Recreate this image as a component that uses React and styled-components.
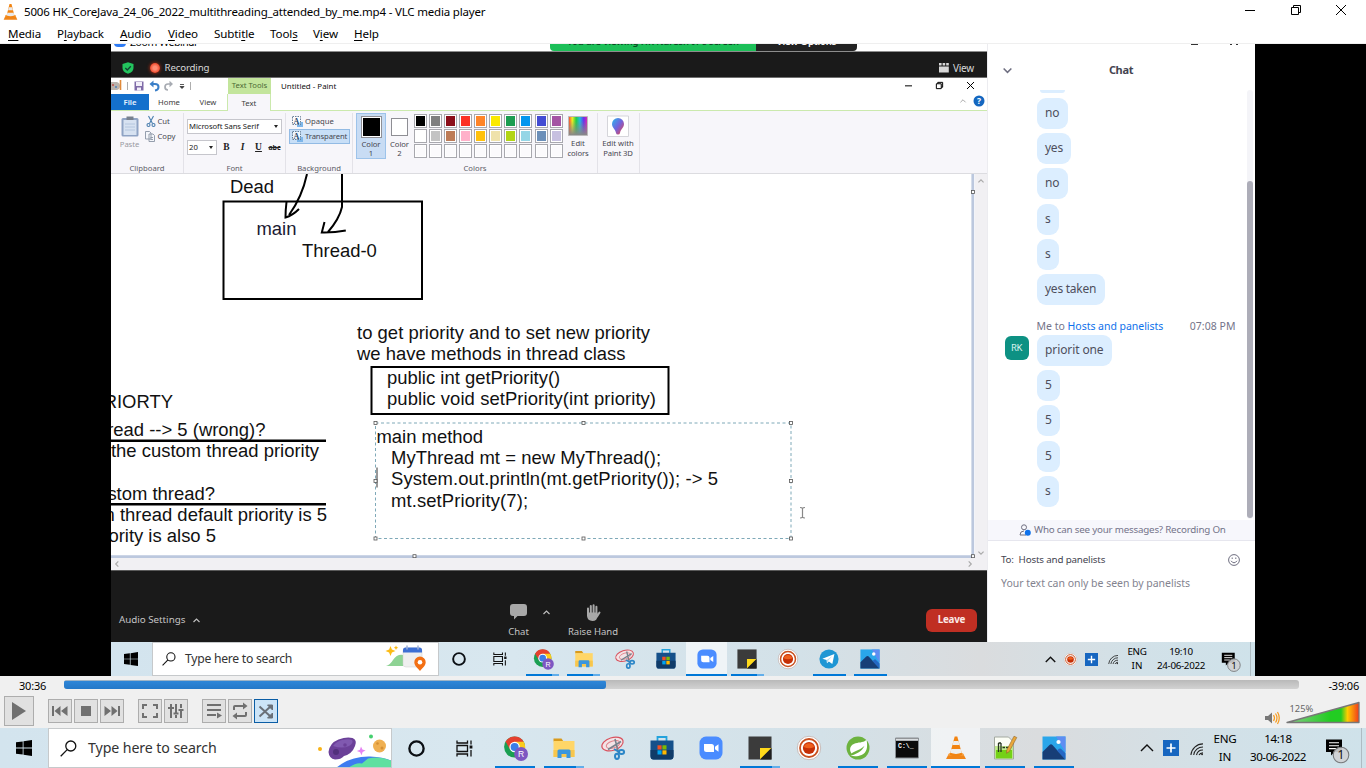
import React from "react";
import styled, { createGlobalStyle, css } from "styled-components";

const Global = createGlobalStyle`
  *, *::before, *::after { box-sizing: border-box; }
  html, body { margin: 0; padding: 0; overflow: hidden; }
  body { font-family: "Noto Sans", "Open Sans", sans-serif; color: #000; }
  svg { display: block; flex: none; overflow: visible; }
`;

const Screen = styled.div`
  width: 1366px;
  height: 768px;
  display: flex;
  flex-direction: column;
  background: #fff;
  overflow: hidden;
`;

const Text = styled.span`
  display: block;
  flex: none;
  white-space: pre;
  font-size: ${(p) => p.$size || 11.5}px;
  font-weight: ${(p) => p.$weight || 400};
  color: ${(p) => p.$color || "#000"};
  letter-spacing: ${(p) => p.$track || 0}px;
  line-height: ${(p) => p.$line || 14}px;
`;

/* ---------- VLC window frame ---------- */

const TitleBar = styled.header`
  height: 24px;
  flex: none;
  display: flex;
  align-items: center;
  padding-left: 3px;
  gap: 6px;
`;

const WindowButtons = styled.div`
  display: flex;
  margin-left: auto;
  padding: 0 20px 4px 0;
  gap: 35.500px;
`;

const MenuBar = styled.nav`
  height: 20px;
  flex: none;
  display: flex;
  align-items: center;
  padding-left: 8px;
  border-bottom: 1px solid #efefef;
`;

const MenuItem = styled.div`
  width: ${(p) => p.$w}px;
  font-size: 11.6px;
  line-height: 18px;
  letter-spacing: -0.13px;
  white-space: nowrap;
  u { text-underline-offset: 2px; text-decoration-thickness: 1px; }
`;

const VideoArea = styled.main`
  height: 632px;
  flex: none;
  background: #000;
  padding: 0 111px;
`;

const VideoFrame = styled.div`
  width: 1144px;
  height: 632px;
  display: flex;
  flex-direction: column;
  overflow: hidden;
`;

const Webinar = styled.div`
  height: 598px;
  display: flex;
`;

const Stage = styled.section`
  width: 876px;
  display: flex;
  flex-direction: column;
  background: #1a1a1a;
`;

/* ---------- Zoom webinar ---------- */

const CutTitle = styled.div`
  height: 8px;
  flex: none;
  display: flex;
  overflow: hidden;
  background: #fff;
  border-bottom: 1px solid #8d8d8d;
`;

const CutLogo = styled.div`
  width: 12px;
  height: 13px;
  flex: none;
  margin: -10px 4px 0 3px;
  border-radius: 4px;
  background: #2d7bf4;
`;

const CutText = styled(Text)`
  margin-top: -9px;
  width: ${(p) => (p.$w ? p.$w + "px" : "auto")};
`;

const Banner = styled.div`
  display: flex;
  margin-left: 350px;
  height: 6.5px;
  border-radius: 0 0 4px 4px;
  overflow: hidden;
`;

const BannerPart = styled.div`
  width: ${(p) => p.$w}px;
  height: 20px;
  background: ${(p) => p.$bg};
  display: flex;
  justify-content: center;
`;

const StageTop = styled.div`
  height: 26px;
  flex: none;
  display: flex;
  align-items: center;
  padding: 6px 13px 0 11px;
  border-bottom: 1px solid #6f6f6f;
`;

const RecDot = styled.div`
  width: 10px;
  height: 10px;
  margin: 0 5px 0 15.500px;
  border-radius: 50%;
  background: radial-gradient(#ff8d74 25%, #f0492b 70%);
  box-shadow: 0 0 3px 1px #7a2413;
`;

const ViewButton = styled.div`
  display: flex;
  align-items: center;
  gap: 4px;
  margin-left: auto;
`;

const StageBottom = styled.div`
  height: 72px;
  flex: none;
  display: flex;
  padding-top: 33px;
  border-top: 1px solid #5a5a5a;
`;

const AudioSettings = styled.div`
  width: 389px;
  display: flex;
  align-items: center;
  gap: 8px;
  padding: 0 0 6px 8px;
  height: 38px;
`;

const ToolButton = styled.div`
  width: ${(p) => p.$w}px;
  display: flex;
  flex-direction: column;
  align-items: center;
  justify-content: space-between;
  height: 33.5px;
`;

const CaretSlot = styled.div`
  width: 18px;
  padding: 5px 0 0 6px;
`;

const LeaveButton = styled.div`
  width: 51px;
  height: 23px;
  margin: 5px 10px 0 auto;
  border-radius: 6px;
  background: #c02f23;
  display: flex;
  align-items: center;
  justify-content: center;
  padding-bottom: 1px;
`;

/* ---------- Paint ---------- */

const PaintTitle = styled.div`
  height: 16px;
  flex: none;
  display: flex;
  align-items: center;
  background: #fff;
`;

const QuickTools = styled.div`
  width: 117px;
  display: flex;
  align-items: center;
`;

const ContextTab = styled.div`
  width: 43px;
  height: 16px;
  margin-right: 10px;
  padding-bottom: 2px;
  background: #c3e59c;
  display: flex;
  align-items: center;
  justify-content: center;
`;

const PaintButtons = styled.div`
  display: flex;
  align-items: center;
  gap: 24px;
  margin: 0 13.5px 1px auto;
`;

const TabRow = styled.div`
  height: 17px;
  flex: none;
  display: flex;
  align-items: stretch;
  background: #fff;
  border-bottom: 1px solid #cbe9ad;
`;

const Tab = styled.div`
  width: ${(p) => p.$w}px;
  display: flex;
  align-items: center;
  justify-content: center;
  background: ${(p) => p.$bg || "transparent"};
  ${(p) =>
    p.$active &&
    css`
      background: #f7f6fa;
      margin-bottom: -1px;
      border: 1px solid #cbe9ad;
      border-width: 0 1px;
    `}
`;

const TabEnd = styled.div`
  display: flex;
  align-items: center;
  gap: 7px;
  margin: -2px 2px 0 auto;
`;

const Ribbon = styled.div`
  height: 63px;
  flex: none;
  display: flex;
  background: #f7f6fa;
  border-bottom: 1px solid #dcdce0;
`;

const Group = styled.div`
  width: ${(p) => p.$w}px;
  margin: 2px 0 0;
  padding-top: ${(p) => p.$top || 0}px;
  border-right: 1px solid #e3e2e8;
  display: flex;
  flex-direction: column;
`;

const GroupBody = styled.div`
  flex: 1;
  display: flex;
  padding-left: ${(p) => p.$left || 0}px;
  min-height: 0;
`;

const GroupLabel = styled(Text).attrs({ $size: 7.7, $color: "#5c5c66", $line: 10 })`
  align-self: center;
`;

const Stack = styled.div`
  display: flex;
  flex-direction: column;
  align-items: ${(p) => p.$align || "stretch"};
  width: ${(p) => p.$w}px;
  gap: ${(p) => p.$gap || 0}px;
  padding-top: ${(p) => p.$top || 0}px;
`;

const IconLine = styled.div`
  display: flex;
  align-items: center;
  gap: 2px;
  height: 15px;
  width: ${(p) => (p.$w ? p.$w + "px" : "auto")};
  padding-left: 2px;
  border: 1px solid ${(p) => (p.$on ? "#93bbe4" : "transparent")};
  background: ${(p) => (p.$on ? "#c8dff7" : "transparent")};
`;

const Combo = styled.div`
  width: ${(p) => p.$w}px;
  height: 15px;
  flex: none;
  border: 1px solid #c6c6cc;
  background: #fff;
  display: flex;
  align-items: center;
  justify-content: space-between;
  padding: 0 3px 0 1px;
`;

const FontRow = styled.div`
  display: flex;
  align-items: center;
  > :nth-child(2) { margin-left: 1.5px; }
`;

const Glyph = styled.span`
  width: 16px;
  flex: none;
  text-align: center;
  font: ${(p) => p.$font || 'bold 9.5px "Liberation Serif", serif'};
  color: #222;
  text-decoration: ${(p) => p.$deco || "none"};
`;

const ColorButton = styled.div`
  width: ${(p) => p.$w}px;
  height: 46px;
  display: flex;
  flex-direction: column;
  align-items: center;
  padding-top: ${(p) => p.$top}px;
  border: 1px solid ${(p) => (p.$on ? "#9dc3ea" : "transparent")};
  background: ${(p) => (p.$on ? "#c8dcf4" : "transparent")};
`;

const Swatch = styled.div`
  width: ${(p) => p.$s}px;
  height: ${(p) => p.$s + 1}px;
  margin-bottom: ${(p) => p.$below}px;
  background: ${(p) => p.$c};
  border: 1px solid #8e8e94;
  box-shadow: inset 0 0 0 1px #fff;
`;

const Palette = styled.div`
  display: grid;
  grid-template-columns: repeat(10, 13px);
  grid-auto-rows: 14px;
  column-gap: 2.07px;
  row-gap: 1px;
  width: 151px;
  margin: 1px 3px 0 1px;
`;

const Cell = styled.div`
  background: ${(p) => p.$c};
  border: 1px solid #a8a8ae;
  box-shadow: inset 0 0 0 1px #fff;
`;

const CanvasRow = styled.div`
  height: 384px;
  flex: none;
  display: flex;
`;

const CanvasView = styled.div`
  width: 864px;
  height: 384px;
  overflow: hidden;
`;

const VScroll = styled.div`
  width: 12px;
  background: #f1f0f3;
  display: flex;
  flex-direction: column;
  justify-content: space-between;
  align-items: center;
  padding: 4px 0 2px;
`;

const HScroll = styled.div`
  height: 12px;
  flex: none;
  background: #f1f0f3;
  display: flex;
  justify-content: space-between;
  align-items: center;
  padding: 0 14px 0 3px;
`;

/* ---------- Chat panel ---------- */

const ChatPanel = styled.aside`
  width: 268px;
  background: #fff;
  display: flex;
  flex-direction: column;
  border-left: 1px solid #ececf0;
`;

const CutButtons = styled.div`
  height: 2px;
  flex: none;
  display: flex;
  padding: 0 15px 0 203px;
  justify-content: space-between;
`;

const CutMark = styled.i`
  width: ${(p) => p.$w}px;
  height: 1px;
  background: #333;
  box-shadow: ${(p) => (p.$pair ? "6px 0 #333" : "none")};
  margin-right: ${(p) => (p.$pair ? 8 : 0)}px;
`;

const ChatHeader = styled.div`
  height: 44px;
  flex: none;
  display: grid;
  grid-template-columns: 16px 1fr 16px;
  align-items: center;
  padding: 4px 12px 0 11px;
  justify-items: center;
`;

const MessagesRow = styled.div`
  height: 430px;
  flex: none;
  display: flex;
  overflow: hidden;
`;

const Messages = styled.div`
  width: 259px;
  display: flex;
  flex-direction: column;
  align-items: flex-start;
  gap: 4.3px;
  padding-left: 48.5px;
`;

const Bubble = styled.div`
  height: 31px;
  flex: none;
  padding: 0 8.5px;
  border-radius: 9px;
  background: #dceeff;
  color: #4e4e5c;
  font-size: 12px;
  letter-spacing: ${(p) => p.$track || -0.25}px;
  line-height: 30px;
  white-space: nowrap;
`;

const BubbleStub = styled.div`
  width: 25px;
  height: 3px;
  margin: 0 0 0.4px 3px;
  border-radius: 0 0 7px 7px;
  background: #dceeff;
  flex: none;
`;

const MessageMeta = styled.div`
  height: 14px;
  width: 199px;
  margin: 10px 0 -3px 0;
  display: flex;
  flex: none;
  > :last-child { margin-left: auto; }
`;

const OwnMessage = styled.div`
  display: flex;
  gap: 8px;
  margin-left: -32px;
  flex: none;
`;

const Avatar = styled.div`
  width: 24px;
  height: 24px;
  margin-top: 1px;
  border-radius: 6px;
  background: #0d9183;
  color: #d9f3ef;
  font-size: 9.5px;
  line-height: 23px;
  letter-spacing: -0.3px;
  text-align: center;
`;

const ScrollTrack = styled.div`
  width: 6px;
  height: 429px;
  padding-top: 91px;
  border-radius: 3px;
  background: #f4f4f8;
`;

const ScrollThumb = styled.div`
  height: 337px;
  border-radius: 3px;
  background: #adadb8;
`;

const Notice = styled.div`
  height: 21px;
  flex: none;
  display: flex;
  align-items: center;
  gap: 3px;
  padding-left: 31px;
  background: #f7f7fc;
  border-bottom: 1px solid #e6e6ee;
`;

const ToRow = styled.div`
  display: flex;
  align-items: center;
  height: 16px;
  margin: 11px 15px 8px 13px;
  svg { margin-left: auto; }
`;

const Placeholder = styled(Text)`
  margin-left: 13px;
`;

/* ---------- Taskbars ---------- */

const Bar = styled.div`
  height: ${(p) => p.$h}px;
  flex: none;
  display: flex;
  background: linear-gradient(90deg, #d3e4ee 0%, #d8e7ef 35%, #d3e1e8 60%, #dadcde 76%, #d2e1e8 90%, #cfe2ea 100%);
`;

const Slot = styled.div`
  width: ${(p) => p.$w}px;
  height: 100%;
  flex: none;
  display: flex;
  align-items: center;
  justify-content: center;
`;

const SearchBox = styled.div`
  width: ${(p) => p.$w}px;
  height: 100%;
  flex: none;
  display: flex;
  align-items: center;
  overflow: hidden;
  background: #fff;
  border: 1px solid #c6c9cb;
  padding-left: ${(p) => p.$left}px;
  gap: ${(p) => p.$gap}px;
  > svg:last-child { margin-left: auto; margin-right: ${(p) => p.$art}px; }
`;

const Apps = styled.div`
  display: flex;
  margin-left: ${(p) => p.$left}px;
`;

const AppSlot = styled.div`
  width: ${(p) => p.$w}px;
  height: 100%;
  display: flex;
  flex-direction: column;
  align-items: center;
  background: ${(p) => (p.$active ? "rgba(255,255,255,.62)" : "transparent")};
`;

const AppIcon = styled.div`
  flex: 1;
  display: flex;
  align-items: center;
  margin-bottom: -2px;
`;

const Underline = styled.div`
  width: ${(p) => p.$w}px;
  height: 2px;
  background: ${(p) =>
    !p.$on ? "transparent" : p.$multi ? "linear-gradient(90deg, #0078d7 80%, #62aeea 80%)" : "#0078d7"};
`;

const Tray = styled.div`
  display: flex;
  margin-left: auto;
  padding-right: 4px;
`;

const TrayEdge = styled.div`
  width: 1px;
  background: #aebcc3;
`;

const TwoLines = styled.div`
  width: ${(p) => p.$w}px;
  display: flex;
  flex-direction: column;
  align-items: center;
  justify-content: center;
`;

/* ---------- VLC controls ---------- */

const Controls = styled.footer`
  height: 52px;
  flex: none;
  background: #f0f0f0;
`;

const SeekRow = styled.div`
  height: 19px;
  display: flex;
  align-items: center;
  padding: 1px 7px 0 19px;
  justify-content: space-between;
`;

const SeekTrack = styled.div`
  width: 1235px;
  height: 9px;
  margin: -3px 10px 0 -2px;
  border-radius: 3px;
  background: linear-gradient(#b9b9b9, #d2d2d2);
`;

const SeekFill = styled.div`
  width: 542px;
  height: 9px;
  border-radius: 3px;
  background: linear-gradient(#9fb4c6 0 1px, #2e86d8 1px, #2478c8);
`;

const ButtonRow = styled.div`
  display: flex;
  align-items: center;
  height: 32px;
  padding: 0 6px 0 4px;
`;

const ButtonGroup = styled.div`
  display: flex;
  gap: 2px;
  margin-left: 14px;
`;

const ControlButton = styled.div`
  width: ${(p) => p.$s || 24}px;
  height: ${(p) => p.$s || 24}px;
  display: flex;
  align-items: center;
  justify-content: center;
  border: 1px solid ${(p) => (p.$on ? "#0a5da5" : "#adadad")};
  background: ${(p) => (p.$on ? "#cce4f7" : "#e1e1e1")};
`;

const Volume = styled.div`
  display: flex;
  align-items: flex-end;
  gap: 6px;
  margin: 2px 0 0 auto;
  > svg:first-child { margin-bottom: -3px; }
`;

/* ---------- Icons ---------- */

const Cone = ({ s }) => (
  <svg width={s} height={s + 1} viewBox="0 0 24 24" preserveAspectRatio="none">
    <path d="M4.500 16.500h15l3.500 7H1z" fill="#f08519" />
    <path d="M4.500 16.500h15l1 2.200h-17z" fill="#f9a544" />
    <path d="M10.400 0h3.200L18.700 19q-6.700 3-13.400 0z" fill="#f28412" />
    <path d="M9.300 5h5.400l1.200 4.300H8.100zM7 13h10l1.200 4.300q-6.200 2.300-12.400 0z" fill="#e9e9ea" />
  </svg>
);

const WinControl = ({ kind, s = 10, color = "#000" }) => (
  <svg width={s} height={s} viewBox="0 0 10 10" fill="none" stroke={color} strokeWidth={10 / s}>
    {kind === "min" && <path d="M0 5.500h10" />}
    {kind === "max" && <path d="M.5 2.500h7v7h-7zM2.500 2.500v-2h7v7h-2" />}
    {kind === "close" && <path d="M0 0l10 10M10 0L0 10" />}
  </svg>
);

const Chevron = ({ dir = "up", w = 7, color = "#555", sw = 1.2 }) => {
  const turn = { up: 0, down: 180, left: -90, right: 90 }[dir];
  return (
    <svg width={w} height={w} viewBox="0 0 10 10" fill="none" stroke={color} strokeWidth={(sw * 10) / w}>
      <path d="M.7 7.200L5 2.900l4.300 4.300" transform={`rotate(${turn} 5 5)`} />
    </svg>
  );
};

const WindowsLogo = ({ s }) => (
  <svg width={s} height={s} viewBox="0 0 16 16" fill="#000">
    <path d="M0 2.300l6.700-.9v6.200H0zM7.500 1.300L16 0v7.600H7.500zM0 8.400h6.700v6.200L0 13.700zM7.500 8.400H16V16l-8.500-1.200z" />
  </svg>
);

const SearchIcon = ({ s }) => (
  <svg width={s} height={s} viewBox="0 0 17 17" fill="none" stroke="#111" strokeWidth="1.300">
    <circle cx="10.800" cy="6" r="5" />
    <path d="M7.200 9.600L.7 16.200" />
  </svg>
);

const TaskView = ({ s }) => (
  <svg width={s} height={s} viewBox="0 0 17 17" fill="none" stroke="#111" strokeWidth="1.300">
    <path d="M1 .5v2.500h10.500V.5M1 5.500h10.500v6H1zM1 16.500V14h10.500v2.500M15 .5v4M15 10v6.500" />
    <path d="M13.600 5.500h2.800v3h-2.800z" fill="#111" stroke="none" />
  </svg>
);

const Cortana = ({ s }) => (
  <svg width={s} height={s} viewBox="0 0 16 16">
    <circle cx="8" cy="8" r="6.700" fill="none" stroke="#0b0f14" strokeWidth="2.200" />
  </svg>
);

const appArt = {
  chrome: (
    <g transform="translate(.6 0)">
      <circle cx="11" cy="11" r="10.500" fill="#1a9f52" />
      <path d="M11 11L1.900 5.700A10.500 10.500 0 0120.100 5.700z" fill="#e5402f" />
      <path d="M11 11V5.700h9.100A10.500 10.500 0 0111 21.500l4.600-7.900z" fill="#fccb1c" />
      <path d="M2 5.600l4.500 8 4.500-8z" fill="#e5402f" />
      <circle cx="11" cy="11" r="5.200" fill="#fff" />
      <circle cx="11" cy="11" r="4" fill="#3b7de8" />
      <circle cx="17.500" cy="18" r="6.900" fill="#7e57c2" />
      <text x="17.500" y="21" fontSize="8.500" textAnchor="middle" fill="#fff" fontFamily="Liberation Sans, sans-serif">R</text>
    </g>
  ),
  folder: (
    <>
      <path d="M1.500 2.500h8l2 3h-10z" fill="#d99a1b" />
      <path d="M1.500 5h21v16h-21z" fill="#ffd668" />
      <path d="M1.500 14h21v7h-21z" fill="#f7c64d" />
      <path d="M5.500 22V15q0-1.500 1.500-1.500h10q1.500 0 1.500 1.500v7h-4v-4h-5v4z" fill="#3a96dd" />
    </>
  ),
  snip: (
    <>
      <ellipse cx="11.500" cy="8" rx="11" ry="6.300" fill="#f3e3e6" stroke="#d9525e" strokeWidth="1.200" transform="rotate(-18 11.500 8)" />
      <ellipse cx="12" cy="8.500" rx="7" ry="3.500" fill="none" stroke="#e0848c" transform="rotate(-18 12 8.500)" />
      <path d="M7 13.500L20 5.500M14 3l3.500 14" stroke="#77828c" strokeWidth="1.600" />
      <g fill="none" stroke="#2c86c7" strokeWidth="2">
        <ellipse cx="20.500" cy="16" rx="2.600" ry="2" />
        <ellipse cx="16" cy="20.300" rx="2" ry="2.600" />
      </g>
      <path d="M13 13l5 3" stroke="#2c86c7" strokeWidth="1.800" />
    </>
  ),
  store: (
    <>
      <path d="M7.500 6V1h9v5" fill="none" stroke="#24a3dc" strokeWidth="1.800" />
      <path d="M.5 4.500h23V20q0 3.500-3 3.500h-17q-3 0-3-3.500z" fill="#15508a" />
      <path d="M.5 14h23v6q0 3.500-3 3.500h-17q-3 0-3-3.500z" fill="#103b68" />
      <path d="M7.500 9.300H11.600v4.200H7.500z" fill="#f25022" />
      <path d="M12.400 9.300h4.100v4.200h-4.100z" fill="#7fba00" />
      <path d="M7.500 14.300h4.100v4.200H7.500z" fill="#00a4ef" />
      <path d="M12.400 14.300h4.100v4.200h-4.100z" fill="#ffb900" />
    </>
  ),
  zoom: (
    <>
      <rect x=".5" y=".5" width="23" height="23" rx="6.500" fill="#4a8cff" />
      <path d="M5 8h7.500q2.500 0 2.500 2.500V16H7.500Q5 16 5 13.500zM16 10.800L19.500 8.300v7.400L16 13.200z" fill="#fff" />
    </>
  ),
  notes: (
    <>
      <path d="M.5.5h23v23H.5z" fill="#3b3b3b" />
      <path d="M12 12h11.500L12 23.500z" fill="#ffd91a" />
      <path d="M23.500 12v11.500H12z" fill="#1f1f1f" />
    </>
  ),
  record: (
    <>
      <circle cx="12" cy="12" r="11.700" fill="#fff" stroke="#b9a49e" strokeWidth=".7" />
      <circle cx="12" cy="12" r="9" fill="none" stroke="#c9501f" strokeWidth="1.800" />
      <circle cx="12" cy="12" r="6.100" fill="#c52f06" />
      <path d="M6.800 11a5.500 5.500 0 0110.400 0q-5.200 2.500-10.400 0z" fill="#ee5f1d" />
    </>
  ),
  telegram: (
    <>
      <circle cx="12" cy="12" r="11.500" fill="#1e96d4" />
      <path d="M4 11.700L18.500 6 16 18l-4.200-3-2.200 2-.4-3.700z" fill="#fff" />
      <path d="M9.200 13.300L16 8.500l-5 5.500-1.400 3z" fill="#b9dcf0" />
    </>
  ),
  spring: (
    <>
      <circle cx="12" cy="12" r="11.500" fill="#6db33f" />
      <path d="M20.500 3.500c1.500 8 .5 13-5 15.500-3.500 1.600-7.500 1.400-11 .8 5-1.400 11.500-4 14-10C14 14 9 15 5.500 17.500 2.500 13 4.500 8.500 9.500 7.200 14 6.200 18.500 6.500 20.500 3.500z" fill="#fff" />
    </>
  ),
  cmd: (
    <>
      <path d="M.5 2h23v20H.5z" fill="#0b0b0b" stroke="#8a8f94" />
      <path d="M1 2.500h22v2.300H1z" fill="#d9dde0" />
      <text x="3" y="11.500" fontSize="6.500" fill="#fff" fontWeight="700" fontFamily="Liberation Mono, monospace">C:\_</text>
    </>
  ),
  vlc: (
    <>
      <path d="M5 17.500h14l3 5.500H2z" fill="#f08519" />
      <path d="M5 17.500h14l1.200 2H3.800z" fill="#f9a544" />
      <path d="M10.700.5h2.600l4.900 18.200q-6.200 3-12.400 0z" fill="#f28412" />
      <path d="M9.500 5h5l1.100 4H8.400zM7.300 13h9.400l1 3.800q-5.700 2.300-11.400 0z" fill="#eee" />
    </>
  ),
  npp: (
    <>
      <path d="M1.500 1h14l5 5v17h-19z" fill="#fbfdf5" stroke="#a3a9a0" />
      <path d="M2.500 10h17v12.500h-17z" fill="#74d116" />
      <path d="M2.500 10h17v4h-17z" fill="#c2ec8e" />
      <path d="M5.500 7v9M8 7v9M5.500 7H8M9.500 11.500h2.500M13 11.500h3" stroke="#26331f" strokeWidth="1.300" fill="none" />
      <path d="M21 .2l2.800 1.300-7.500 14-2.800 1.800.2-3.200z" fill="#e9a73a" stroke="#91652a" strokeWidth=".6" />
    </>
  ),
  photos: (
    <>
      <path d="M.5.5h23v23H.5z" fill="#2aa6ea" />
      <path d="M14 .5h9.500v16z" fill="#5f8df2" />
      <path d="M.5 16l7-7q1.500-1.400 3 0L23.500 23.500H.5z" fill="#173e77" />
      <path d="M12 11.500l3 3 2-1.700q1-.8 2 0l4.500 4.500v6.200z" fill="#2567c4" />
      <circle cx="16.500" cy="6" r="2.100" fill="#fff" />
    </>
  ),
};

const App24 = ({ name, s }) => (
  <svg width={s} height={s} viewBox="0 0 24 24">{appArt[name]}</svg>
);

const PlusBox = ({ s }) => (
  <svg width={s} height={s} viewBox="0 0 16 16">
    <path d="M0 0h16v16H0z" fill="#1766c0" />
    <path d="M8 3.500v9M3.500 8h9" stroke="#fff" strokeWidth="1.700" />
  </svg>
);

const Wifi = ({ s }) => (
  <svg width={s} height={s} viewBox="0 0 14 14" fill="none" stroke="#222" strokeWidth="1.150">
    <path d="M1 14A13 13 0 0114 2M4 14a10 10 0 0110-8.700M7 14a7 7 0 017-5.300M9.700 14q1-2.200 4.300-2.500" />
    <circle cx="13" cy="13.200" r="1" fill="#222" stroke="none" />
  </svg>
);

const Notification = ({ s }) => (
  <svg width={s} height={s} viewBox="0 -3.500 26 26">
    <path d="M1 1h16v12.500H9.500L6 17v-3.500H1z" fill="#000" />
    <path d="M4 4.300h10M4 7.200h10M4 10.100h7" stroke="#fff" strokeWidth="1.100" />
    <circle cx="16" cy="16.500" r="7.800" fill="#cfd2d4" fillOpacity=".9" stroke="#77797b" strokeWidth="1.100" />
    <text x="16" y="20.700" textAnchor="middle" fontSize="12" fill="#111" fontFamily="Noto Sans, sans-serif">1</text>
  </svg>
);

const SpaceArt = () => (
  <svg width="76" height="38" viewBox="316 729 76 38">
    <path d="M336 768q14-12 34-11.500 14 .5 22 4.500v7z" fill="#3d7cf0" />
    <path d="M348 768q8-6 14-4.500l6-5q12-3 24 2.500v7z" fill="#5fe0a0" />
    <circle cx="320" cy="749" r="2" fill="#f8b316" />
    <path d="M328.500 752q1-9 10-12.500 8-3 14-1.500 5 2 2.500 8-3 8-11 10-3 3.500-9 3.500-6-1-6.500-7.500z" fill="#6b4098" />
    <path d="M333 746q4-5 9-6 7-1.500 10 0 2 3-3 6-7 3-16 0z" fill="#8059b0" />
    <circle cx="336" cy="752" r="3" fill="#52307c" /><circle cx="345" cy="745" r="1.800" fill="#6b4098" />
    <path d="M361 746.500l1.400 3 3.200 1-3 1.500-1 3.200-1.500-3-3.200-1.200 3-1.300z" fill="#e683f3" />
    <circle cx="371" cy="736.500" r="2" fill="#45cf6e" />
    <circle cx="379.500" cy="746" r="6.500" fill="#efb052" />
    <circle cx="377.500" cy="743.500" r="1.300" fill="#d58f34" /><circle cx="382" cy="748" r="1.500" fill="#d58f34" />
  </svg>
);

const TravelArt = () => (
  <svg width="42" height="28" viewBox="0 0 42 28">
    <path d="M1 21q4-1 7-6 4-6 10-5v11z" fill="#8ed394" />
    <path d="M5.500 1l1.400 3.600L10.500 6 6.900 7.400 5.500 11 4.100 7.400.5 6l3.600-1.400zM11 .5l.7 1.500 1.500.7-1.500.7-.7 1.500-.7-1.500-1.500-.7 1.500-.7z" fill="#fcbb14" />
    <rect x="18" y="3" width="19" height="19" rx="3" fill="#efefef" stroke="#cfcfcf" strokeWidth=".5" />
    <path d="M18 7.500V5q0-2.500 2.500-2.500h14Q37 2.500 37 5v2.500z" fill="#3d6fd3" />
    <path d="M22 .5v4M33 .5v4" stroke="#9db0d8" strokeWidth="1.500" />
    <path d="M35 11.500a5.700 5.700 0 015.700 5.700C40.700 21 37 23 35 26c-2-3-5.700-5-5.700-8.800A5.700 5.700 0 0135 11.500z" fill="#f36f13" />
    <circle cx="35" cy="17.300" r="2.300" fill="#fff" />
  </svg>
);

const TextModeIcon = () => (
  <svg width="11" height="11" viewBox="0 0 11 11">
    <path d="M5 6h6v5H5z" fill="#7db6ea" />
    <path d="M.5.500h8v8h-8z" fill="#fff" fillOpacity=".7" stroke="#46637e" strokeDasharray="1.500 1" strokeWidth=".8" />
    <text x="4.300" y="7.500" fontSize="8" fontWeight="700" textAnchor="middle" fill="#2a4a6c" fontFamily="Liberation Serif, serif">A</text>
  </svg>
);

const ctl = {
  play: <path d="M2 0l14 9-14 9z" />,
  prev: <path d="M1 4h2v10H1zM9.500 4v10L3.500 9zM16.500 4v10L10 9z" />,
  stop: <path d="M4 4h10v10H4z" />,
  next: <path d="M15 4h2v10h-2zM1.500 4v10L8 9zM8.500 4v10l6-5z" />,
  full: <path d="M1 2h5v2H3v3H1zM12 2h5v5h-2V4h-3zM1 11h2v3h3v2H1zM15 11h2v5h-5v-2h3z" />,
  eq: <path d="M3 6h2v10H3zM3 2h2v3H3zM1 5h6v2H1zM8 2h2v9H8zM8 13h2v3H8zM6.500 10.500h5v2h-5zM13 2h2v4h-2zM13 9h2v7h-2zM11.500 7h5v2h-5z" />,
  list: <path d="M2 2h14v2H2zM2 7h14v2H2zM2 12h9v2H2zM12 10.500l5 3-5 3z" />,
  loop: <path d="M2 8V5q0-2 2-2h8V.5L16.500 4 12 7.500V5H4v3zM16 10v3q0 2-2 2H6v2.500L1.500 14 6 10.500V13h8v-3z" />,
  shuffle: (
    <g fill="none" stroke="#6a7078" strokeWidth="2">
      <path d="M2.500 4.500l11 10M2.500 14.500l11-10" />
      <path d="M10.500 3h5v5zM10.500 16h5v-5z" fill="#6a7078" strokeWidth="1" />
    </g>
  ),
};

const Ctl = ({ name, s = 18 }) => (
  <svg width={s} height={s} viewBox="0 0 18 18" fill="#707070">{ctl[name]}</svg>
);

/* ---------- Data ---------- */

const menus = [
  ["", "M", "edia", 49], ["P", "l", "ayback", 63], ["", "A", "udio", 48], ["", "V", "ideo", 46],
  ["Subti", "t", "le", 56], ["Tool", "s", "", 43], ["V", "i", "ew", 41], ["", "H", "elp", 40],
];

const colors = [
  "#000", "#7f7f7f", "#8b0d19", "#fc3225", "#ff8427", "#fbe900", "#1a9d50", "#0396ee", "#424bd3", "#a454a4",
  "#fff", "#c3c3c3", "#bd7b57", "#ffb0c9", "#ffc10c", "#efe2ab", "#b2d515", "#95d6e6", "#6b8fb9", "#c7c0e0",
  ...Array(10).fill("#fbfafc"),
];

const innerApps = [
  ["chrome", "multi"], ["folder", "multi"], ["snip"], ["store"], ["zoom", "active"],
  ["notes", "multi"], ["record"], ["telegram", "open"], ["photos", "open"],
];

const outerApps = [
  ["chrome", "open"], ["folder", "multi"], ["snip"], ["store"], ["zoom"], ["notes", "multi"], ["record"],
  ["spring", "open"], ["cmd", "open"], ["vlc", "active"], ["npp", "open"], ["photos", "open"],
];

const sizes = {
  inner: {
    h: 34, start: 40.5, logo: 14, search: 287, left: 9, gap: 9.5, icon: 14, font: 12.2, track: -0.27, art: 11,
    slot: 41, appsLeft: 2, app: 40.9, appIcon: 20, line: 33, small: 13, tray: [20, 21, 21, 22, 26, 62, 38],
    lang: 9.8, step: 14, note: 21, clockTrack: -0.3,
  },
  outer: {
    h: 40, start: 48, logo: 16, search: 344, left: 10.5, gap: 11.5, icon: 17, font: 14.2, track: -0.1, art: -1,
    slot: 48, appsLeft: 2.8, app: 48.95, appIcon: 24, line: 40, small: 16, tray: [24, 0, 24, 26, 32, 74, 46],
    lang: 11.6, step: 18, note: 26, clockTrack: -0.45,
  },
};

function Taskbar({ kind, apps, time, date, art }) {
  const z = sizes[kind];
  const [chev, rec, plus, wifi, lang, clock, note] = z.tray;
  return (
    <Bar $h={z.h}>
      <Slot $w={z.start}><WindowsLogo s={z.logo} /></Slot>
      <SearchBox $w={z.search} $left={z.left} $gap={z.gap} $art={z.art}>
        <SearchIcon s={z.icon} />
        <Text $size={z.font} $track={z.track} $line={20} $color="#333">Type here to search</Text>
        {art}
      </SearchBox>
      <Slot $w={z.slot}><Cortana s={z.icon} /></Slot>
      <Slot $w={z.slot}><TaskView s={z.icon} /></Slot>
      <Apps $left={z.appsLeft}>
        {apps.map(([name, state]) => (
          <AppSlot key={name} $w={z.app} $active={state === "active"}>
            <AppIcon><App24 name={name} s={z.appIcon} /></AppIcon>
            <Underline $w={state === "active" ? z.app : z.line} $on={!!state} $multi={state === "multi"} />
          </AppSlot>
        ))}
      </Apps>
      <Tray>
        <Slot $w={chev}><Chevron w={z.small - 2} color="#111" sw={1.4} /></Slot>
        {rec > 0 && <Slot $w={rec}><App24 name="record" s={13} /></Slot>}
        <Slot $w={plus}><PlusBox s={z.small} /></Slot>
        <Slot $w={wifi}><Wifi s={z.small - 3} /></Slot>
        <TwoLines $w={lang}>
          <Text $size={z.lang} $line={z.step} $track={-0.3}>ENG</Text>
          <Text $size={z.lang} $line={z.step}>IN</Text>
        </TwoLines>
        <TwoLines $w={clock}>
          <Text $size={z.lang} $line={z.step} $track={z.clockTrack}>{time}</Text>
          <Text $size={z.lang} $line={z.step} $track={z.clockTrack}>{date}</Text>
        </TwoLines>
        <Slot $w={note}><Notification s={z.note} /></Slot>
        <TrayEdge />
      </Tray>
    </Bar>
  );
}

const Handle = ({ x, y }) => (
  <rect x={x - 1.500} y={y - 1.500} width="3" height="3" fill="#fff" stroke="#555" strokeWidth=".8" />
);

function Drawing() {
  return (
    <svg width="864" height="384" viewBox="111 174 864 384" fontFamily="Liberation Sans, Arial, sans-serif" fontSize="18.45" fill="#111">
      <path d="M111 174h864v384H111z" fill="#fff" />
      <g fill="none" stroke="#000" strokeWidth="2.400">
        <path d="M223.500 201.500h198.500v97.500h-198.500zM371.500 367h297v47h-297z" strokeWidth="2" />
        <path d="M307 174c-3 14-10 30-18 41M286.500 202q-1 8-1 15.500 7-2 13.500-8.500M342 174v33c-2 9-8 18-14 25M324.500 222l-2.700 10.500q12 .3 24-2" strokeWidth="2" />
        <path d="M111 440.800h215M111 504.300h215" />
      </g>
      <text x="230" y="192.500">Dead</text>
      <text x="256.500" y="235" fill="#1b1b33">main</text>
      <text x="302" y="257">Thread-0</text>
      <text x="357" y="338.500" textLength="293">to get priority and to set new priority</text>
      <text x="357" y="360">we have methods in thread class</text>
      <text x="387" y="384">public int getPriority()</text>
      <text x="387" y="405.300" textLength="269">public void setPriority(int priority)</text>
      <g textAnchor="end">
        <text x="173" y="407.700">RIORTY</text>
        <text x="265.500" y="435.700">read --&gt; 5 (wrong)?</text>
        <text x="319" y="457">the custom thread priority</text>
        <text x="215" y="499.500">stom thread?</text>
        <text x="327" y="521">n thread default priority is 5</text>
        <text x="216" y="541.700">ority is also 5</text>
      </g>
      <text x="376.500" y="442.500">main method</text>
      <text x="391" y="464" textLength="270">MyThread mt = new MyThread();</text>
      <text x="391" y="485" textLength="327">System.out.println(mt.getPriority()); -&gt; 5</text>
      <text x="391" y="506.500" textLength="137">mt.setPriority(7);</text>
      <path d="M375.500 423h415.500v115.500H375.500z" fill="none" stroke="#7fa9b8" strokeDasharray="3 2.500" />
      <path d="M377 467.500v20" stroke="#333" />
      {[[375.5, 423], [583.5, 423], [791, 423], [375.5, 481], [791, 481], [375.5, 538.5], [583.5, 538.5], [791, 538.5]].map(([x, y]) => (
        <Handle key={`${x}-${y}`} x={x} y={y} />
      ))}
      <path d="M800 507.500q2 0 2.500 1 .5-1 2.500-1M802.500 508v9.500M800 518q2 0 2.500-1 .5 1 2.500 1" fill="none" stroke="#888" strokeWidth="1.200" />
      <path d="M972.800 174v382.700M111 556.700h863" stroke="#bcc8de" strokeWidth="2.800" />
      <Handle x={973} y={192} />
      <Handle x={414.500} y={556.200} />
      <Handle x={973} y={556.200} />
    </svg>
  );
}

function PaintWindow() {
  const label = { $size: 7.7, $line: 9, $color: "#474750" };
  const tab = { $size: 7.7, $line: 10, $color: "#3c3c3c" };
  return (
    <>
      <PaintTitle>
        <QuickTools>
          <svg width="84" height="12" viewBox="0 0 84 12">
            <path d="M0 2h6q3 1 3 4t-3 4H0z" fill="#b9b3ac" />
            <circle cx="2" cy="5" r="1" fill="#c0504d" /><circle cx="5" cy="7" r="1" fill="#4f81bd" />
            <path d="M9.500 0v10" stroke="#e08a3a" strokeWidth="1.600" />
            <path d="M16.500 2v8M79.500 2v8" stroke="#999" strokeWidth=".8" />
            <path d="M23.500 1.500h9v9h-9z" fill="#7f6ba8" /><path d="M25 2h6v4h-6zM26 7.500h4v3h-4z" fill="#f1eef8" />
            <path d="M41 4h3q3.500 0 3.500 3T44 10.500" fill="none" stroke="#3b7fc8" strokeWidth="2" /><path d="M38.500 4L42.500.500v7z" fill="#3b7fc8" />
            <path d="M60 4h-3q-3 0-3 3t3 3" fill="none" stroke="#a7abb2" strokeWidth="1.700" /><path d="M62 4L58.500.800v6.400z" fill="#a7abb2" />
            <path d="M69 4.500h4M69 6.500h4l-2 2z" stroke="#333" strokeWidth=".8" fill="#333" />
          </svg>
        </QuickTools>
        <ContextTab><Text $size={7.7} $line={10} $color="#4c6a34">Text Tools</Text></ContextTab>
        <Text $size={7.9} $line={10} $color="#111">Untitled - Paint</Text>
        <PaintButtons>
          <WinControl kind="min" s={7} />
          <WinControl kind="max" s={7} />
          <WinControl kind="close" s={7} />
        </PaintButtons>
      </PaintTitle>
      <TabRow>
        <Tab $w={38} $bg="#1470cc"><Text {...tab} $color="#e8f2ff" $weight={600}>File</Text></Tab>
        <Tab $w={40}><Text {...tab}>Home</Text></Tab>
        <Tab $w={38}><Text {...tab}>View</Text></Tab>
        <Tab $w={44} $active><Text {...tab}>Text</Text></Tab>
        <TabEnd>
          <Chevron w={6} color="#aaa" sw={1} />
          <svg width="12" height="12" viewBox="0 0 12 12">
            <circle cx="6" cy="6" r="5.500" fill="#1467c0" />
            <text x="6" y="9" fontSize="8.500" fontWeight="700" textAnchor="middle" fill="#fff" fontFamily="Noto Sans, sans-serif">?</text>
          </svg>
        </TabEnd>
      </TabRow>
      <Ribbon>
        <Group $w={73}>
          <GroupBody $left={6.5}>
            <Stack $w={24} $align="center" $top={3}>
              <svg width="18" height="21" viewBox="0 0 18 21">
                <rect x=".5" y="2" width="17" height="18.500" rx="1.500" fill="#8fa3c4" />
                <path d="M2.500 4h13v15h-13z" fill="#d7e2f1" /><path d="M5.500.5h7V4h-7z" fill="#77808e" />
                <path d="M4 8h10M4 11h10M4 14h10" stroke="#b4c6de" />
              </svg>
              <Text {...label} $line={14} $color="#9a9aa2" $track={-0.1}>Paste</Text>
            </Stack>
            <Stack $w={41} $top={1}>
              <IconLine>
                <svg width="11" height="11" viewBox="-1 0 11 11" fill="none" stroke="#4a7fae" strokeWidth="1.100">
                  <path d="M2.500 0l4 7.500M7.500 0l-4 7.500" /><circle cx="2.500" cy="9" r="1.500" /><circle cx="7.500" cy="9" r="1.500" />
                </svg>
                <Text {...label}>Cut</Text>
              </IconLine>
              <IconLine>
                <svg width="11" height="11" viewBox="0 0 11 11" fill="#f4f6fa" stroke="#8a94a4" strokeWidth=".9">
                  <path d="M.5.500h4l1.500 1.500v6h-5.500zM4 3h4l1.500 1.500v6H4z" /><path d="M5.500 6.500h2.500M5.500 8.500h2.500" />
                </svg>
                <Text {...label}>Copy</Text>
              </IconLine>
            </Stack>
          </GroupBody>
          <GroupLabel>Clipboard</GroupLabel>
        </Group>
        <Group $w={102} $top={6}>
          <GroupBody $left={3}>
            <Stack $w={98} $gap={5.5}>
              <Combo $w={95}>
                <Text {...label} $color="#222" $track={-0.08}>Microsoft Sans Serif</Text>
                <svg width="4" height="3" viewBox="0 0 4 3"><path d="M0 0h4L2 3z" fill="#222" /></svg>
              </Combo>
              <FontRow>
                <Combo $w={30}>
                  <Text {...label} $color="#222">20</Text>
                  <svg width="4" height="3" viewBox="0 0 4 3"><path d="M0 0h4L2 3z" fill="#222" /></svg>
                </Combo>
                <Glyph>B</Glyph>
                <Glyph $font={'italic bold 9.5px "Liberation Serif", serif'}>I</Glyph>
                <Glyph $deco="underline">U</Glyph>
                <Glyph $font={'bold 7px "Noto Sans", sans-serif'} $deco="line-through">abc</Glyph>
              </FontRow>
            </Stack>
          </GroupBody>
          <GroupLabel>Font</GroupLabel>
        </Group>
        <Group $w={67}>
          <GroupBody $left={3}>
            <Stack $w={61} $top={0.5}>
              <IconLine $w={61}><TextModeIcon /><Text {...label}>Opaque</Text></IconLine>
              <IconLine $w={61} $on><TextModeIcon /><Text {...label} $track={-0.12}>Transparent</Text></IconLine>
            </Stack>
          </GroupBody>
          <GroupLabel>Background</GroupLabel>
        </Group>
        <Group $w={245}>
          <GroupBody $left={3}>
            <ColorButton $w={30} $top={1.5} $on>
              <Swatch $s={21} $c="#000" $below={2.5} />
              <Text {...label} $track={-0.1}>Color</Text><Text {...label}>1</Text>
            </ColorButton>
            <ColorButton $w={27} $top={4}>
              <Swatch $s={17} $c="#fff" $below={4} />
              <Text {...label} $track={-0.1}>Color</Text><Text {...label}>2</Text>
            </ColorButton>
            <Palette>{colors.map((c, i) => <Cell key={i} $c={c} />)}</Palette>
            <Stack $w={20} $align="center" $top={2}>
              <svg width="20" height="22" viewBox="0 0 20 22">
                <defs>
                  <linearGradient id="hue"><stop offset="0" stopColor="#f33" /><stop offset=".2" stopColor="#ee2" /><stop offset=".4" stopColor="#2c4" /><stop offset=".6" stopColor="#2bd" /><stop offset=".8" stopColor="#63e" /><stop offset="1" stopColor="#e2a" /></linearGradient>
                  <linearGradient id="fade" x2="0" y2="1"><stop offset=".2" stopColor="#888" stopOpacity="0" /><stop offset="1" stopColor="#888" /></linearGradient>
                </defs>
                <path d="M.5 1.500h19v19H.5z" fill="url(#hue)" stroke="#bbb" /><path d="M1 2h18v18H1z" fill="url(#fade)" />
              </svg>
              <Text {...label} $line={13}>Edit</Text><Text {...label} $line={6} $track={-0.1}>colors</Text>
            </Stack>
          </GroupBody>
          <GroupLabel>Colors</GroupLabel>
        </Group>
        <Group $w={42}>
          <Stack $align="center" $top={2} $w={40}>
            <svg width="22" height="22" viewBox="0 0 22 22">
              <defs><linearGradient id="pin" x2="1" y2="1"><stop offset="0" stopColor="#28b8ee" /><stop offset=".5" stopColor="#7462dc" /><stop offset="1" stopColor="#f0423c" /></linearGradient></defs>
              <path d="M.5 1h21v20.500H.5z" fill="#fff" stroke="#d5d5da" />
              <path d="M11 3a6 6 0 016 6c0 4-3.500 5-4 9q-.2 1.500-2 1.500T9 18c-.5-4-4-5-4-9a6 6 0 016-6z" fill="url(#pin)" />
            </svg>
            <Text {...label} $line={13}>Edit with</Text><Text {...label} $line={6} $track={-0.1}>Paint 3D</Text>
          </Stack>
        </Group>
      </Ribbon>
      <CanvasRow>
        <CanvasView><Drawing /></CanvasView>
        <VScroll><Chevron w={6} color="#aaa" /><Chevron w={6} dir="down" color="#aaa" /></VScroll>
      </CanvasRow>
      <HScroll><Chevron w={6} dir="left" color="#aaa" /><Chevron w={6} dir="right" color="#aaa" /></HScroll>
    </>
  );
}

function Chat() {
  return (
    <ChatPanel>
      <CutButtons><CutMark $w={7} /><CutMark $w={2} $pair /></CutButtons>
      <ChatHeader>
        <Chevron dir="down" w={9} color="#6e6e80" sw={1.500} />
        <Text $size={11} $weight={700} $color="#444450" $track={-0.35}>Chat</Text>
      </ChatHeader>
      <MessagesRow>
        <Messages>
          <BubbleStub />
          <Bubble>no</Bubble>
          <Bubble>yes</Bubble>
          <Bubble>no</Bubble>
          <Bubble>s</Bubble>
          <Bubble>s</Bubble>
          <Bubble>yes taken</Bubble>
          <MessageMeta>
            <Text $size={10.500} $color="#74748a">Me to </Text>
            <Text $size={10.500} $color="#0e71eb" $track={-0.03}>Hosts and panelists</Text>
            <Text $size={10.500} $color="#74748a" $track={0.05}>07:08 PM</Text>
          </MessageMeta>
          <OwnMessage><Avatar>RK</Avatar><Bubble $track={-0.1}>priorit one</Bubble></OwnMessage>
          <Bubble>5</Bubble>
          <Bubble>5</Bubble>
          <Bubble>5</Bubble>
          <Bubble>s</Bubble>
        </Messages>
        <ScrollTrack><ScrollThumb /></ScrollTrack>
      </MessagesRow>
      <Notice>
        <svg width="12" height="12" viewBox="0 0 12 12">
          <g fill="none" stroke="#6e6e80" strokeWidth="1"><circle cx="5" cy="3.300" r="2.500" /><path d="M7 11H1q0-4 4-4" /></g>
          <circle cx="8.800" cy="8.800" r="3" fill="#0e71eb" />
        </svg>
        <Text $size={9.800} $color="#74748a" $track={-0.21}>Who can see your messages? Recording On</Text>
      </Notice>
      <ToRow>
        <Text $size={9.800} $color="#444450" $track={-0.17}>{"To:  Hosts and panelists"}</Text>
        <svg width="12" height="12" viewBox="0 0 12 12" fill="none" stroke="#6e6e80">
          <circle cx="6" cy="6" r="5.400" /><path d="M3 6.800q3 4 6 0" /><path d="M4.200 3.500v1.500M7.800 3.500v1.500" />
        </svg>
      </ToRow>
      <Placeholder $size={10.500} $color="#83838f" $track={-0.03}>Your text can only be seen by panelists</Placeholder>
    </ChatPanel>
  );
}

export default function App() {
  return (
    <Screen>
      <Global />
      <TitleBar>
        <Cone s={15} />
        <Text $size={11.500} $track={-0.18}>5006 HK_CoreJava_24_06_2022_multithreading_attended_by_me.mp4 - VLC media player</Text>
        <WindowButtons>
          <WinControl kind="min" /><WinControl kind="max" /><WinControl kind="close" />
        </WindowButtons>
      </TitleBar>
      <MenuBar>
        {menus.map(([a, key, b, w]) => (
          <MenuItem key={a + key + b} $w={w}>{a}<u>{key}</u>{b}</MenuItem>
        ))}
      </MenuBar>
      <VideoArea>
        <VideoFrame>
          <Webinar>
            <Stage>
              <CutTitle>
                <CutLogo />
                <CutText $size={10.500} $track={-0.4} $w={70}>Zoom Webinar</CutText>
                <Banner>
                  <BannerPart $w={206} $bg="#1cbf58"><CutText $size={9.500} $weight={600} $color="#0a4a22" $track={-0.1}>You are viewing HK Naresh IT's screen</CutText></BannerPart>
                  <BannerPart $w={101} $bg="#222"><CutText $size={9.500} $weight={600} $color="#fff" $track={-0.1}>View Options</CutText></BannerPart>
                </Banner>
              </CutTitle>
              <StageTop>
                <svg width="12" height="12" viewBox="0 0 12 12">
                  <path d="M6 .3l5.500 1.700v4Q11.500 10 6 11.800.5 10 .5 6V2z" fill="#23c45e" />
                  <path d="M3.300 6l2 2 3.500-3.700" stroke="#143" strokeWidth="1.300" fill="none" />
                </svg>
                <RecDot />
                <Text $size={9.700} $color="#d8d8d8" $track={-0.15}>Recording</Text>
                <ViewButton>
                  <svg width="10" height="10" viewBox="0 0 10 10" fill="#d8d8d8"><path d="M0 0h2.600v2.500H0zM3.600 0h2.600v2.500H3.600zM7.200 0h2.600v2.500H7.200zM0 3.500h9.800v6H0z" /></svg>
                  <Text $size={10} $color="#d8d8d8" $track={-0.2}>View</Text>
                </ViewButton>
              </StageTop>
              <PaintWindow />
              <StageBottom>
                <AudioSettings>
                  <Text $size={9.800} $color="#c4c4c4" $track={-0.02}>Audio Settings</Text>
                  <Chevron w={7} color="#bdbdbd" />
                </AudioSettings>
                <ToolButton $w={37}>
                  <svg width="17" height="16" viewBox="0 0 17 16" fill="#a8a8a8"><path d="M3 0h11q3 0 3 3v6q0 3-3 3H7.500L4 15.500V12H3q-3 0-3-3V3q0-3 3-3z" /></svg>
                  <Text $size={9.500} $color="#c4c4c4" $line={12}>Chat</Text>
                </ToolButton>
                <CaretSlot><Chevron w={7} color="#bdbdbd" /></CaretSlot>
                <ToolButton $w={76}>
                  <svg width="15" height="18" viewBox="0 0 15 18" fill="none" stroke="#a8a8a8" strokeWidth="2" strokeLinecap="round">
                    <path d="M2 4.500V10M4.800 2v8M7.600 1.300V10M10.400 2.800V10M13.500 8.500l-2.500 4" />
                    <path d="M2 9.500h8.400v2.500q0 4-4 4T2 12z" fill="#a8a8a8" />
                  </svg>
                  <Text $size={9.500} $color="#c4c4c4" $line={12}>Raise Hand</Text>
                </ToolButton>
                <LeaveButton><Text $size={9.800} $weight={700} $color="#fbe9e7" $track={-0.25}>Leave</Text></LeaveButton>
              </StageBottom>
            </Stage>
            <Chat />
          </Webinar>
          <Taskbar kind="inner" apps={innerApps} time="19:10" date="24-06-2022" art={<TravelArt />} />
        </VideoFrame>
      </VideoArea>
      <Controls>
        <SeekRow>
          <Text $size={11} $track={-0.2}>30:36</Text>
          <SeekTrack><SeekFill /></SeekTrack>
          <Text $size={11} $track={-0.2}>-39:06</Text>
        </SeekRow>
        <ButtonRow>
          <ControlButton $s={30}><Ctl name="play" /></ControlButton>
          <ButtonGroup>
            {["prev", "stop", "next"].map((n) => <ControlButton key={n}><Ctl name={n} /></ControlButton>)}
          </ButtonGroup>
          <ButtonGroup>
            {["full", "eq"].map((n) => <ControlButton key={n}><Ctl name={n} /></ControlButton>)}
          </ButtonGroup>
          <ButtonGroup>
            {["list", "loop", "shuffle"].map((n) => <ControlButton key={n} $on={n === "shuffle"}><Ctl name={n} /></ControlButton>)}
          </ButtonGroup>
          <Volume>
            <svg width="15" height="16" viewBox="0 0 15 16">
              <path d="M0 5h3l4-3.500v11L3 9H0z" fill="#777" />
              <path d="M8.500 4q2 3 0 6M10.500 2.500q3 4.500 0 9M12.500 1q3.500 6 0 12" fill="none" stroke="#f59a1d" strokeWidth="1.200" />
            </svg>
            <svg width="74" height="24" viewBox="0 0 74 24">
              <defs><linearGradient id="vol"><stop offset="0" stopColor="#8c8" /><stop offset=".6" stopColor="#2c2" /><stop offset=".75" stopColor="#2c2" /><stop offset=".84" stopColor="#fc0" /><stop offset="1" stopColor="#f03a1c" /></linearGradient></defs>
              <path d="M1 22.500L73 2.500v20z" fill="url(#vol)" stroke="#777" strokeWidth="1.300" strokeLinejoin="round" />
              <text x="3.500" y="11.500" fontSize="9.300" fill="#666" fontFamily="Noto Sans, sans-serif">125%</text>
            </svg>
          </Volume>
        </ButtonRow>
      </Controls>
      <Taskbar kind="outer" apps={outerApps} time="14:18" date="30-06-2022" art={<SpaceArt />} />
    </Screen>
  );
}
